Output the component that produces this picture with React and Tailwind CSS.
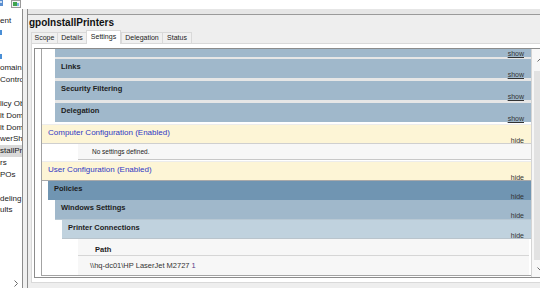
import React from 'react';

const treeRows = [
  { text: 'ent' },
  { icon: true },
  {},
  { icon: true },
  { text: 'omain' },
  { text: 'Controllers' },
  {},
  { text: 'licy Objects' },
  { text: 'lt Domain Policy' },
  { text: 'lt Domain Controllers' },
  { text: 'werShell' },
  { text: 'stallPrinters', selected: true },
  { text: 'rs' },
  { text: 'POs' },
  {},
  { text: 'deling' },
  { text: 'ults' },
];

const tabs = [
  { name: 'Scope', w: 'w-[26px]' },
  { name: 'Details', w: 'w-[29px]' },
  { name: 'Settings', w: 'w-[35px]', active: true },
  { name: 'Delegation', w: 'w-[41px]' },
  { name: 'Status', w: 'w-[30px]' },
];

// one report heading bar: title on top, show/hide link under it at the right
const Header = ({ title, link, className, titleClass = 'font-bold text-[7.5px] text-[#1c1c1c]' }) => (
  <div className={`flex flex-col shrink-0 ${className}`}>
    <div className={`h-[12px] pt-[3px] pl-[6px] leading-[9px] whitespace-nowrap ${titleClass}`}>{title}</div>
    <div className="h-[7px] pr-[7px] text-right text-[7px] leading-[7px] text-[#333]">
      {link === 'show' ? <span className="underline">show</span> : link}
    </div>
  </div>
);

const Chevron = ({ dir }) => {
  const d = {
    up: 'M0.5 3.5 L3.5 0.5 L6.5 3.5',
    down: 'M0.5 0.5 L3.5 3.5 L6.5 0.5',
  }[dir];
  return (
    <svg width="7" height="4" viewBox="0 0 7 4">
      <path d={d} fill="none" stroke="#6b6b6b" strokeWidth="1" />
    </svg>
  );
};

export default function App() {
  return (
    <div className="w-[540px] h-[288px] overflow-hidden bg-white flex flex-col font-['Liberation_Sans',Arial,sans-serif] text-[#1a1a1a]">
      {/* toolbar strip */}
      <div className="h-[9px] shrink-0 flex items-start gap-[7px]">
        <svg width="4" height="7" viewBox="0 0 4 7">
          <rect x="0" y="0" width="3" height="6" fill="#5b8fd0" />
          <rect x="0" y="1" width="2" height="2" fill="#cfe0f5" />
        </svg>
        <svg width="10" height="8" viewBox="0 0 10 8">
          <rect x="0.5" y="0.5" width="9" height="7" fill="#f3f3f3" stroke="#9a9a9a" />
          <rect x="2" y="2" width="4" height="4" fill="#3fa34d" />
          <rect x="6" y="3" width="2" height="3" fill="#7fb6e6" />
        </svg>
      </div>

      <div className="flex flex-1 min-h-0">
        {/* tree pane */}
        <div className="w-[23px] shrink-0 border-r border-[#8c8c8c] flex flex-col bg-white">
          <div className="flex-1 min-h-0 pt-[6px] overflow-hidden">
            {treeRows.map((r, i) => (
              <div
                key={i}
                className={`h-[11.85px] flex items-center whitespace-nowrap text-[8px] leading-[10px] ${r.selected ? 'bg-[#d9d9d9]' : ''}`}
              >
                {r.icon && <span className="w-[2px] h-[5px] bg-[#4a8fd6]" />}
                {r.text}
              </div>
            ))}
          </div>
          <div className="h-[10px] shrink-0 flex items-center justify-end pr-[4px]">
            <svg width="4" height="7" viewBox="0 0 4 7">
              <path d="M0.5 0.5 L3.5 3.5 L0.5 6.5" fill="none" stroke="#6b6b6b" />
            </svg>
          </div>
        </div>
        <div className="w-[4px] shrink-0 bg-[#f0f0f0]" />

        {/* details pane */}
        <div className="flex-1 min-w-0 border-l border-[#8c8c8c] bg-[#eeeeee] flex flex-col pb-[5px]">
          <div className="h-[6px] shrink-0 bg-[#e6e6e6] border-b border-[#9a9a9a]" />
          <div className="h-[15px] shrink-0 pl-[1px] pt-[2px] text-[10px] font-bold leading-[12px] text-[#111]">
            gpoInstallPrinters
          </div>
          <div className="h-[13px] shrink-0 flex items-end pl-[3px]">
            {tabs.map((t) =>
              t.active ? (
                <div
                  key={t.name}
                  className={`${t.w} h-[14px] -mb-px relative z-10 bg-white border-t border-l border-r border-[#d9d9d9] flex items-center justify-center pb-[2px] text-[7px] leading-[8px] text-[#222]`}
                >
                  {t.name}
                </div>
              ) : (
                <div
                  key={t.name}
                  className={`${t.w} h-[11px] bg-[#f0f0f0] border-t border-l border-[#d9d9d9] last:border-r flex items-center justify-center text-[7px] leading-[8px] text-[#222]`}
                >
                  {t.name}
                </div>
              )
            )}
          </div>

          <div className="flex-1 min-h-0 ml-[3px] bg-white border-t border-l border-b border-[#d9d9d9] pt-[4px] pb-[4px] pl-[2px] overflow-hidden flex">
            <div className="flex shrink-0 border border-[#8c8c8c] h-full">
              {/* report body */}
              <div className="w-[496px] h-full bg-white pl-[6px] overflow-hidden">
                <div className="border-l border-b border-[#a3a3a3] flex flex-col">
                  <div className="ml-[13px] flex flex-col gap-[3px] bg-[#e6e6e6]">
                    <div className="h-[8px] bg-[#a0b8cb] pt-[1px] pr-[7px] text-right text-[7px] leading-[7px] text-[#333]">
                      <span className="underline">show</span>
                    </div>
                    <Header title="Links" link="show" className="h-[19px] bg-[#a0b8cb] -mt-px" />
                    <Header title="Security Filtering" link="show" className="h-[19px] bg-[#a0b8cb]" />
                    <Header title="Delegation" link="show" className="h-[19px] bg-[#a0b8cb]" />
                  </div>

                  <Header
                    title="Computer Configuration (Enabled)"
                    link="hide"
                    className="mt-[2px] h-[20px] bg-[#fdf5d6] border-t border-b border-t-[#ececec] border-b-[#cfcfcf]"
                    titleClass="text-[8px] text-[#3037c4]"
                  />
                  <div className="ml-[36px] h-[16px] shrink-0 bg-[#f7f7f7] border-b border-[#c8c8c8] pl-[14px] pt-[3px] text-[6.5px] leading-[9px] text-[#222]">
                    No settings defined.
                  </div>
                  <Header
                    title="User Configuration (Enabled)"
                    link="hide"
                    className="mt-[1px] h-[20px] bg-[#fdf5d6] border-t border-b border-t-[#ececec] border-b-[#a9a9a9]"
                    titleClass="text-[8px] text-[#3037c4]"
                  />
                  <Header title="Policies" link="hide" className="ml-[6px] h-[19px] bg-[#7095b2]" />
                  <Header title="Windows Settings" link="hide" className="ml-[13px] h-[20px] bg-[#a0b8cb] border-b border-[#b7c7d3]" />
                  <Header title="Printer Connections" link="hide" className="ml-[20px] h-[19px] bg-[#c0d2de] border-b border-[#b9c4cc]" />

                  <div className="ml-[36px] mr-[2px] bg-[#f7f7f7] flex flex-col">
                    <div className="h-[17px] border-b border-[#d6d6d6] pl-[17px] pt-[6px] text-[7.5px] font-bold leading-[9px] text-[#1c1c1c]">
                      Path
                    </div>
                    <div className="h-[19px] pl-[12px] pt-[5px] text-[7.5px] leading-[9px] text-[#333] whitespace-pre">
                      {'\\\\hq-dc01\\HP LaserJet M2727 '}
                      <span className="text-[#5a3a8a]">1</span>
                    </div>
                  </div>
                </div>
              </div>

              {/* vertical scrollbar */}
              <div className="w-[17px] h-full border-l border-[#d4d4d4] bg-[#f7f7f7] flex flex-col">
                <div className="h-[22px] shrink-0 flex items-center justify-center">
                  <Chevron dir="up" />
                </div>
                <div className="flex-1 mx-[2px] bg-[#e2e2e2]" />
                <div className="h-[17px] shrink-0 flex items-center justify-center">
                  <Chevron dir="down" />
                </div>
              </div>
            </div>
          </div>
        </div>
      </div>
    </div>
  );
}
